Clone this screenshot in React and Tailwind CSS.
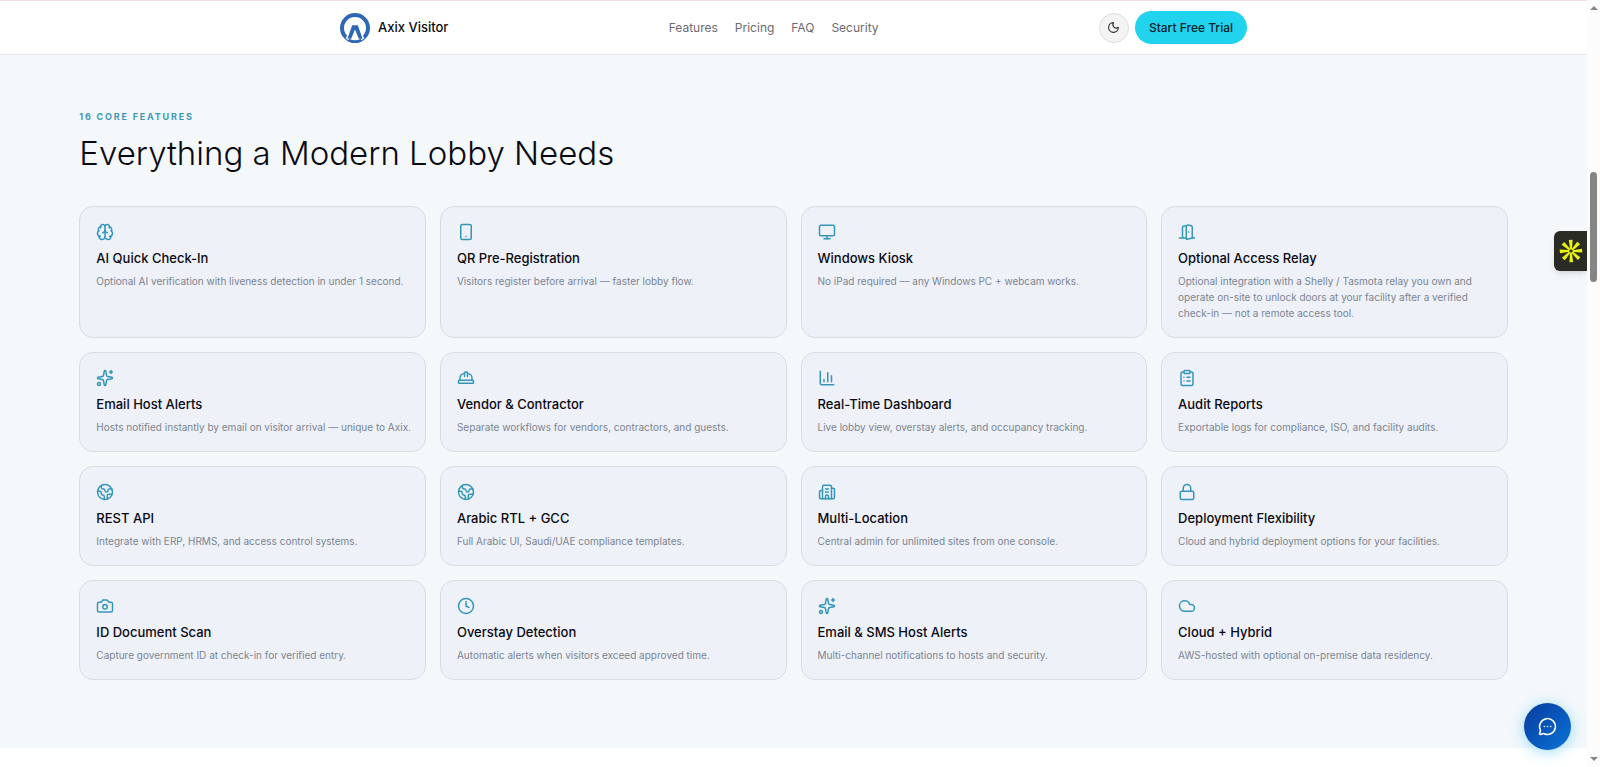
import {
  Brain,
  Building2,
  Camera,
  ChartColumn,
  ClipboardList,
  Clock,
  Cloud,
  DoorOpen,
  Earth,
  HardHat,
  Lock,
  MessageCircleMore,
  Monitor,
  Moon,
  Smartphone,
  Sparkles
} from 'lucide-react';

const NAV_LINKS = ['Features', 'Pricing', 'FAQ', 'Security'];

const FEATURES = [
  { icon: Brain, title: 'AI Quick Check-In', text: 'Optional AI verification with liveness detection in under 1 second.' },
  { icon: Smartphone, title: 'QR Pre-Registration', text: 'Visitors register before arrival — faster lobby flow.' },
  { icon: Monitor, title: 'Windows Kiosk', text: 'No iPad required — any Windows PC + webcam works.' },
  {
    icon: DoorOpen,
    title: 'Optional Access Relay',
    text: 'Optional integration with a Shelly / Tasmota relay you own and operate on-site to unlock doors at your facility after a verified check-in — not a remote access tool.'
  },
  { icon: Sparkles, title: 'Email Host Alerts', text: 'Hosts notified instantly by email on visitor arrival — unique to Axix.' },
  { icon: HardHat, title: 'Vendor & Contractor', text: 'Separate workflows for vendors, contractors, and guests.' },
  { icon: ChartColumn, title: 'Real-Time Dashboard', text: 'Live lobby view, overstay alerts, and occupancy tracking.' },
  { icon: ClipboardList, title: 'Audit Reports', text: 'Exportable logs for compliance, ISO, and facility audits.' },
  { icon: Earth, title: 'REST API', text: 'Integrate with ERP, HRMS, and access control systems.' },
  { icon: Earth, title: 'Arabic RTL + GCC', text: 'Full Arabic UI, Saudi/UAE compliance templates.' },
  { icon: Building2, title: 'Multi-Location', text: 'Central admin for unlimited sites from one console.' },
  { icon: Lock, title: 'Deployment Flexibility', text: 'Cloud and hybrid deployment options for your facilities.' },
  { icon: Camera, title: 'ID Document Scan', text: 'Capture government ID at check-in for verified entry.' },
  { icon: Clock, title: 'Overstay Detection', text: 'Automatic alerts when visitors exceed approved time.' },
  { icon: Sparkles, title: 'Email & SMS Host Alerts', text: 'Multi-channel notifications to hosts and security.' },
  { icon: Cloud, title: 'Cloud + Hybrid', text: 'AWS-hosted with optional on-premise data residency.' }
];

function Logo() {
  return (
    <svg viewBox="0 0 30 30" className="h-[30px] w-[30px]" aria-hidden="true">
      <circle cx="15" cy="15" r="13" fill="#fff" stroke="#2f67b5" strokeWidth="4" />
      <path d="M11.2 11h7.6l5.4 14.5-4 2.5H9.8l-4-2.5z" fill="#fff" />
      <path d="M12.2 12.2h5.6l4.8 13.6h-3.8L15 16.4l-3.8 9.4H7.4z" fill="#2f67b5" />
      <path d="M8.6 27a13.4 13.4 0 0 0 12.8 0" fill="none" stroke="#2f67b5" strokeWidth="3" />
    </svg>
  );
}

function Header() {
  return (
    <header className="border-t border-b border-t-[#f8dbe2] border-b-[#e4e6e9] bg-white">
      <div className="mx-auto flex h-[53px] max-w-[907px] items-center justify-between">
        <a href="#top" className="flex items-center gap-2 text-[13px] font-medium text-[#0b0b0f]">
          <Logo />
          Axix Visitor
        </a>
        <nav className="flex gap-[17px] text-xs text-[#6b6b70]">
          {NAV_LINKS.map((label) => (
            <a key={label} href={`#${label.toLowerCase()}`}>
              {label}
            </a>
          ))}
        </nav>
        <div className="flex items-center gap-1.5">
          <button
            type="button"
            aria-label="Toggle theme"
            className="flex h-[30px] w-[30px] items-center justify-center rounded-full border border-[#dedfe1] bg-[#f4f4f5] text-[#26262b]"
          >
            <Moon className="h-[13px] w-[13px]" />
          </button>
          <button type="button" className="h-[33px] rounded-full bg-[#22d3ee] px-[14px] text-xs font-medium text-[#06202c]">
            Start Free Trial
          </button>
        </div>
      </div>
    </header>
  );
}

function FeatureCard({ icon: Icon, title, text }) {
  return (
    <article className="rounded-[14px] border border-[#d9dde2] bg-[#eef1f8] py-4 pr-3 pl-4">
      <Icon className="h-[18px] w-[18px] text-[#3497ba]" />
      <h3 className="mt-2 text-[13px] leading-[18px] font-medium text-[#0a0a12]">{title}</h3>
      <p className="mt-1.5 text-[10px] leading-4 text-[#7b8592]">{text}</p>
    </article>
  );
}

function WidgetTab() {
  return (
    <button
      type="button"
      aria-label="Open accessibility widget"
      className="fixed top-[231px] right-[13px] flex h-[40px] w-[33px] items-center justify-center rounded-l-md bg-[#2b2b26] shadow-md"
    >
      <svg viewBox="-12 -12 24 24" className="h-6 w-6" fill="#eaf213">
        {[0, 45, 90, 135, 180, 225, 270, 315].map((angle) => (
          <path key={angle} d="M-0.8 -1.6 L-2.2 -11 L1.6 -11.3 L1 -1.6 Z" transform={`rotate(${angle})`} />
        ))}
      </svg>
    </button>
  );
}

function ScrollTrack() {
  return (
    <div className="fixed inset-y-0 right-0 flex w-[13px] flex-col items-center justify-between bg-[#fcfcfc] py-1.5" aria-hidden="true">
      <svg viewBox="0 0 8 4" className="h-1 w-2" fill="#858585">
        <path d="M4 0l4 4H0z" />
      </svg>
      <div className="w-[7px] flex-1 pt-[162px]">
        <div className="h-[110px] rounded-full bg-[#858585]" />
      </div>
      <svg viewBox="0 0 8 4" className="h-1 w-2" fill="#858585">
        <path d="M0 0h8L4 4z" />
      </svg>
    </div>
  );
}

export default function App() {
  return (
    <div id="top" className="min-h-screen bg-white pr-[13px] font-[Inter,'Liberation_Sans',sans-serif]">
      <Header />
      <main>
        <section id="features" className="bg-[#f4f8fb] px-[5%] pt-[54px] pb-[68px]">
          <p className="text-[9px] leading-4 font-bold tracking-[0.2em] text-[#3f97b8] uppercase">16 Core Features</p>
          <h2 className="mt-2 text-[33px] leading-10 font-light text-[#0a0a12]">Everything a Modern Lobby Needs</h2>
          <div className="mt-[33px] grid grid-cols-4 gap-[14px]">
            {FEATURES.map((feature) => (
              <FeatureCard key={feature.title} {...feature} />
            ))}
          </div>
        </section>
      </main>

      <WidgetTab />
      <button
        type="button"
        aria-label="Open chat"
        className="fixed right-[29px] bottom-[17px] flex h-[47px] w-[47px] items-center justify-center rounded-full bg-linear-to-br from-[#0a3a9f] to-[#0b74d6] text-white shadow-[0_2px_14px_rgba(56,189,248,0.5)]"
      >
        <MessageCircleMore className="h-[19px] w-[19px]" />
      </button>
      <ScrollTrack />
    </div>
  );
}
